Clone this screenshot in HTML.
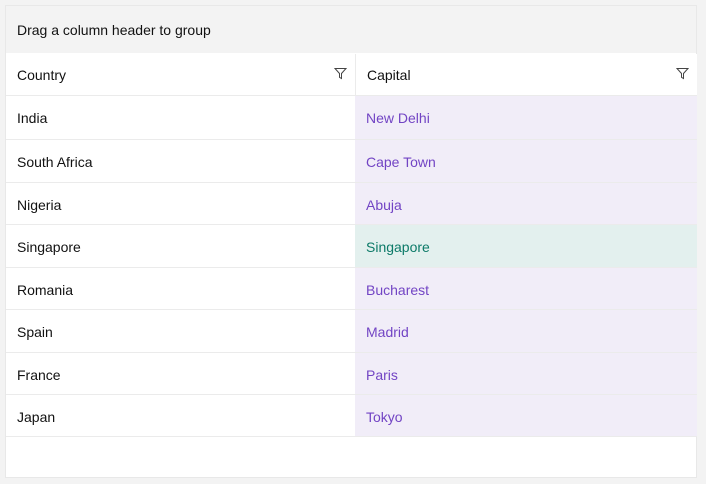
<!DOCTYPE html>
<html><head><style>
body{margin:0;width:706px;height:484px;background:#f3f3f3;font-family:"Liberation Sans",sans-serif;font-size:14px;color:#111;position:relative;overflow:hidden}
.frame{position:absolute;left:5px;top:5px;width:692px;height:473px;background:#fff;border:1px solid #e8e8e8;box-sizing:border-box}
.group{position:absolute;left:5px;top:5px;width:692px;height:48px;background:#f3f3f3;border:1px solid #e8e8e8;border-bottom:none;box-sizing:border-box}
.group span{position:absolute;left:11px;top:16px}
.hdr{position:absolute;top:54px;height:41px;background:#fff}
.hdr span{position:absolute;left:11px;top:13px}
.hdr svg{position:absolute;right:8px;top:13px}
.cell{position:absolute;height:42px;border-bottom:1px solid #ebebeb;box-sizing:border-box}
.cell span{position:absolute;left:11px;top:14px}
.c1{left:6px;width:349px;background:#fff}
.c2{left:355px;width:342px;background:#f1edf8;color:#7244c4}
.c2.sel{background:#e3f0ee;color:#0c7a68}
</style></head><body>
<div class="frame"></div>
<div class="group"><span>Drag a column header to group</span></div>
<div class="hdr" style="left:6px;width:349px"><span>Country</span><svg width="13" height="13" viewBox="0 0 13 13"><path d="M1 1.5h11L7.5 6.5v5l-2-1.2V6.5z" fill="none" stroke="#444" stroke-width="1"/></svg></div>
<div class="hdr" style="left:356px;width:341px"><span>Capital</span><svg width="13" height="13" viewBox="0 0 13 13"><path d="M1 1.5h11L7.5 6.5v5l-2-1.2V6.5z" fill="none" stroke="#444" stroke-width="1"/></svg></div>
<div style="position:absolute;left:6px;top:95px;width:691px;height:1px;background:#ebebeb"></div>
<div style="position:absolute;left:355px;top:54px;width:1px;height:41px;background:#ebebeb"></div>

<div class="cell c1" style="top:96px;height:44px"><span>India</span></div><div class="cell c2" style="top:96px;height:44px"><span>New Delhi</span></div>
<div class="cell c1" style="top:140px;height:43px"><span>South Africa</span></div><div class="cell c2" style="top:140px;height:43px"><span>Cape Town</span></div>
<div class="cell c1" style="top:183px"><span>Nigeria</span></div><div class="cell c2" style="top:183px"><span>Abuja</span></div>
<div class="cell c1" style="top:225px;height:43px"><span>Singapore</span></div><div class="cell c2 sel" style="top:225px;height:43px"><span>Singapore</span></div>
<div class="cell c1" style="top:268px"><span>Romania</span></div><div class="cell c2" style="top:268px"><span>Bucharest</span></div>
<div class="cell c1" style="top:310px;height:43px"><span>Spain</span></div><div class="cell c2" style="top:310px;height:43px"><span>Madrid</span></div>
<div class="cell c1" style="top:353px"><span>France</span></div><div class="cell c2" style="top:353px"><span>Paris</span></div>
<div class="cell c1" style="top:395px"><span>Japan</span></div><div class="cell c2" style="top:395px"><span>Tokyo</span></div>
</body></html>
